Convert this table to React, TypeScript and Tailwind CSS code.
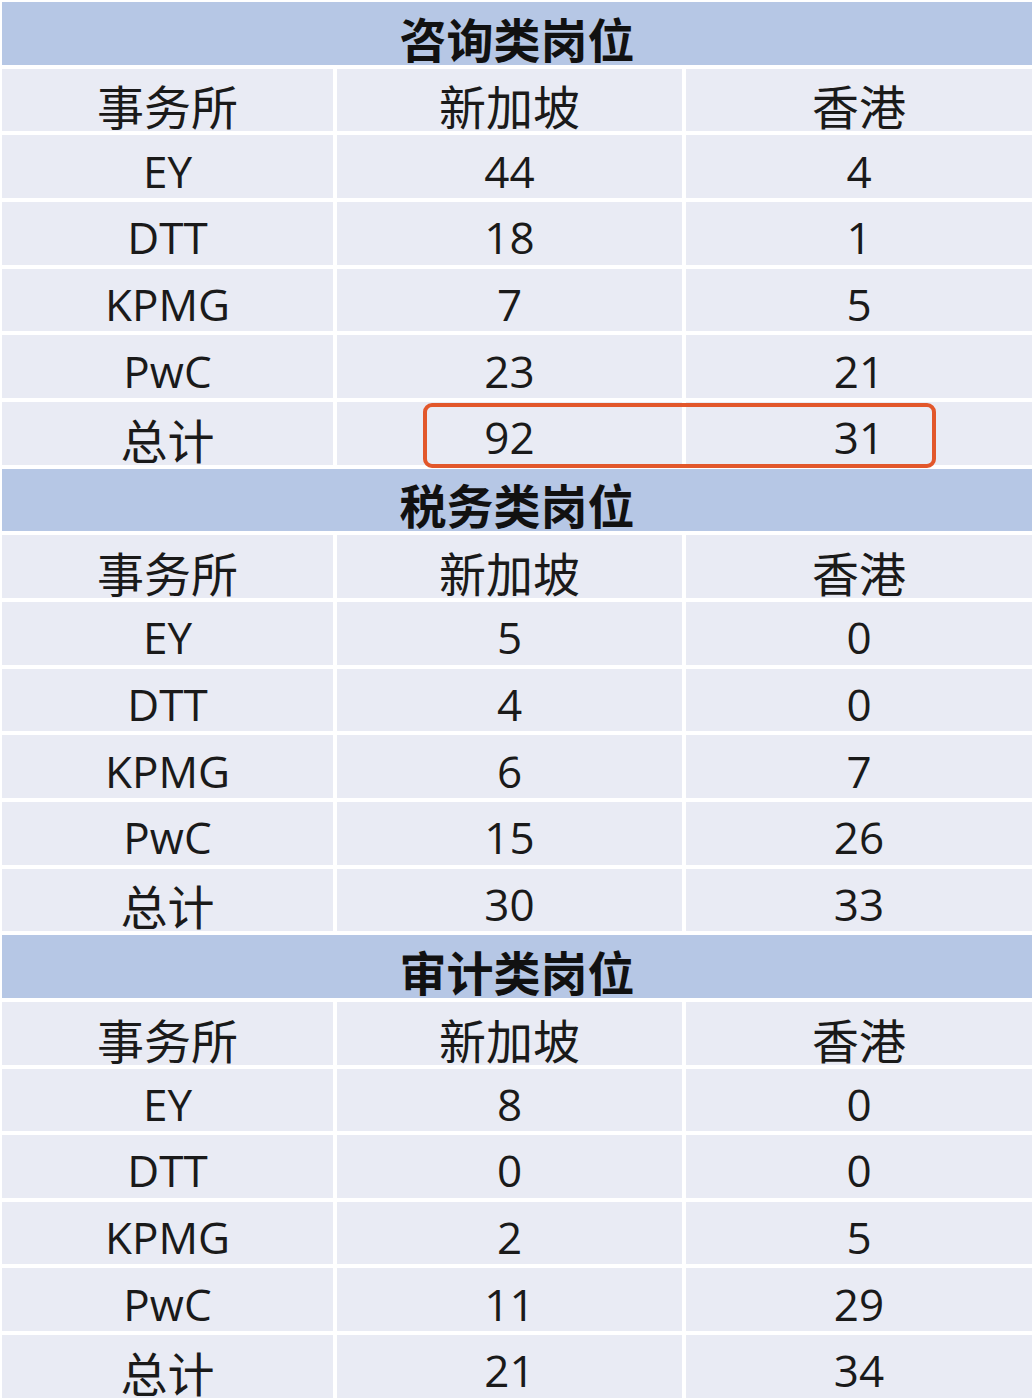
import React from 'react';

interface Section {
  title: string;
  rows: [string, string, string][];
}

const sections: Section[] = [
  {
    title: '咨询类岗位',
    rows: [
      ['EY', '44', '4'],
      ['DTT', '18', '1'],
      ['KPMG', '7', '5'],
      ['PwC', '23', '21'],
      ['总计', '92', '31'],
    ],
  },
  {
    title: '税务类岗位',
    rows: [
      ['EY', '5', '0'],
      ['DTT', '4', '0'],
      ['KPMG', '6', '7'],
      ['PwC', '15', '26'],
      ['总计', '30', '33'],
    ],
  },
  {
    title: '审计类岗位',
    rows: [
      ['EY', '8', '0'],
      ['DTT', '0', '0'],
      ['KPMG', '2', '5'],
      ['PwC', '11', '29'],
      ['总计', '21', '34'],
    ],
  },
];

const cjk = "font-['Noto_Sans_CJK_SC',sans-serif]";
const latin = "font-['Open_Sans','Noto_Sans_CJK_SC',sans-serif]";

const Cell: React.FC<{ text: string }> = ({ text }) => {
  const isCjk = /[\u4e00-\u9fff]/.test(text);
  return (
    <div
      className={`h-[62.67px] bg-[#e9ebf4] flex items-center justify-center text-[#1a1a1a] leading-none ${
        isCjk ? `${cjk} text-[47px] pt-[10px]` : `${latin} text-[44px] pt-[8px]`
      }`}
    >
      {text}
    </div>
  );
};

export default function App() {
  return (
    <div className="w-[1036px] h-[1400px] overflow-hidden bg-white pt-[2px] pl-[2px]">
      <div className="relative w-[1030px] grid grid-cols-[331px_345px_346px] gap-[4px]">
        {sections.map((s) => (
          <React.Fragment key={s.title}>
            <div
              className={`col-span-3 h-[62.67px] bg-[#b6c7e5] flex items-center justify-center ${cjk} font-bold text-[47px] leading-none pt-[8px] text-[#111]`}
            >
              {s.title}
            </div>
            <Cell text="事务所" />
            <Cell text="新加坡" />
            <Cell text="香港" />
            {s.rows.map((r) => (
              <React.Fragment key={s.title + r[0]}>
                <Cell text={r[0]} />
                <Cell text={r[1]} />
                <Cell text={r[2]} />
              </React.Fragment>
            ))}
          </React.Fragment>
        ))}
        <div className="absolute left-[421px] top-[401px] w-[513px] h-[65px] border-[4px] border-[#e2572b] rounded-[9px] pointer-events-none" />
      </div>
    </div>
  );
}
